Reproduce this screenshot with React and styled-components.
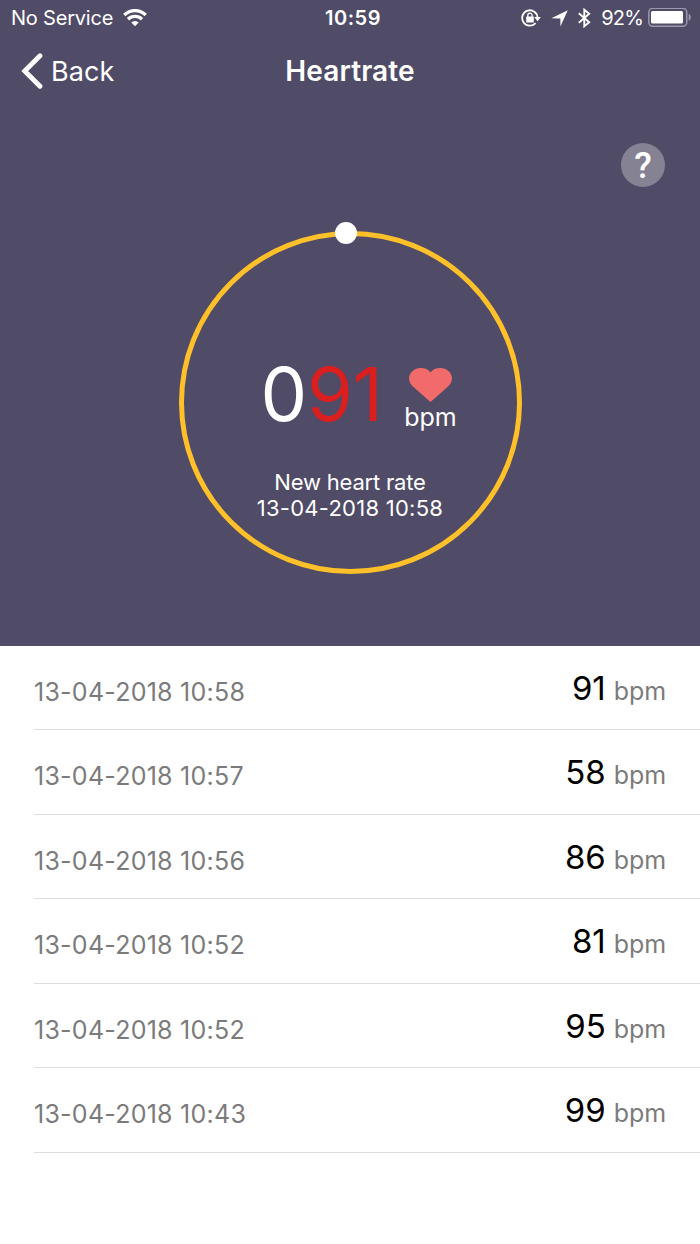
import React from "react";
import styled, { createGlobalStyle } from "styled-components";

const readings = [
  { date: "13-04-2018 10:58", value: 91 },
  { date: "13-04-2018 10:57", value: 58 },
  { date: "13-04-2018 10:56", value: 86 },
  { date: "13-04-2018 10:52", value: 81 },
  { date: "13-04-2018 10:52", value: 95 },
  { date: "13-04-2018 10:43", value: 99 },
];

const WifiIcon = () => (
  <svg width="24" height="18" viewBox="0 0 24 18" fill="none" stroke="#fff" strokeWidth="3.3">
    <path d="M1.3 6a15.2 15.2 0 0 1 21.4 0" />
    <path d="M5 10.3a10 10 0 0 1 14 0" />
    <path d="M12 17.2l-3.7-3.7a5.3 5.3 0 0 1 7.4 0z" fill="#fff" stroke="none" />
  </svg>
);

const LockIcon = () => (
  <svg width="20" height="18" viewBox="0 0 20 18" fill="none" stroke="#fff">
    <path d="M14.6 14.2A7.7 7.7 0 1 1 16.6 8.6" strokeWidth="1.8" />
    <path d="M13.2 8h6.6l-3.2 4.2z" fill="#fff" stroke="none" />
    <rect x="5.2" y="7.6" width="7.6" height="5.8" rx="0.6" fill="#fff" stroke="none" />
    <path d="M6.8 8V6.4a2.2 2.2 0 0 1 4.4 0V8" strokeWidth="1.3" />
  </svg>
);

const LocationIcon = () => (
  <svg width="17" height="17" viewBox="0 0 17 17">
    <path d="M16.8 0.3L9.4 16.6V8.5L0.3 8.2z" fill="#fff" />
  </svg>
);

const BluetoothIcon = () => (
  <svg width="13" height="20" viewBox="0 0 13 20" fill="none" stroke="#fff" strokeWidth="1.9">
    <path d="M0.8 5.3l10.4 9-4.9 4V1.7l4.9 4-10.4 9" />
  </svg>
);

const BatteryIcon = () => (
  <svg width="44" height="20" viewBox="0 0 44 20">
    <rect x="0.8" y="0.3" width="38" height="18" rx="4" fill="none" stroke="#9a97aa" strokeWidth="1.5" />
    <rect x="3" y="3" width="32" height="12.6" rx="1.6" fill="#fff" />
    <path d="M40.6 5.8c3 1 3 6 0 7z" fill="#9a97aa" />
  </svg>
);

const App = () => {
  return (
    <>
      <GlobalStyle />
      <Screen>
        <Hero>
          <StatusBar>
            <StatusLeft>
              <Carrier>No Service</Carrier>
              <WifiIcon />
            </StatusLeft>
            <Clock>10:59</Clock>
            <StatusRight>
              <LockIcon />
              <LocationIcon />
              <BluetoothIcon />
              <Percent>92%</Percent>
              <BatteryIcon />
            </StatusRight>
          </StatusBar>
          <NavBar>
            <BackButton>
              <svg width="22" height="36" viewBox="0 0 22 36">
                <path d="M19 2.7L3.7 18 19 33.3" fill="none" stroke="#fff" strokeWidth="4.8" strokeLinecap="round" />
              </svg>
              Back
            </BackButton>
            <Title>Heartrate</Title>
          </NavBar>
          <HelpRow>
            <HelpButton>?</HelpButton>
          </HelpRow>
          <Ring>
            <Knob />
            <Measure>
              <Digits>
                0<Active>91</Active>
              </Digits>
              <Unit>
                <svg width="43" height="34" viewBox="0 0 43 34">
                  <path d="M21.5 34L3.6 18.2C-1 13.8-1 7.2 3 3.4c4-4 12-4.6 16.6-.9.8.6 1.4 1.3 1.9 2 .5-.7 1.1-1.4 1.9-2C28-1.2 36-.6 40 3.4c4 3.8 4 10.4-.6 14.8z" fill="#f16b6b" />
                </svg>
                <span>bpm</span>
              </Unit>
            </Measure>
            <Caption $spacing="-0.2px">New heart rate</Caption>
            <Caption $spacing="0.25px">13-04-2018 10:58</Caption>
          </Ring>
        </Hero>
        <List>
          {readings.map((item, i) => (
            <Row key={i}>
              <RowDate>{item.date}</RowDate>
              <RowValue>{item.value}</RowValue>
              <RowUnit>bpm</RowUnit>
            </Row>
          ))}
        </List>
      </Screen>
    </>
  );
};

export default App;

const GlobalStyle = createGlobalStyle`
  * {
    box-sizing: border-box;
  }
  body {
    margin: 0;
    background: #fff;
    font-family: Inter, "Liberation Sans", sans-serif;
  }
  svg {
    display: block;
    flex: none;
  }
`;

const Screen = styled.div`
  width: 700px;
  height: 1244px;
  overflow: hidden;
  background: #fff;
`;

const Hero = styled.div`
  height: 645.5px;
  background: #504b66;
  color: #fff;
`;

const StatusBar = styled.div`
  display: grid;
  grid-template-columns: 1fr auto 1fr;
  align-items: center;
  height: 36px;
  padding: 0 8px 0 11px;
  font-size: 20px;
`;

const StatusLeft = styled.div`
  display: flex;
  align-items: center;
  gap: 10px;
`;

const Carrier = styled.span`
  letter-spacing: -0.2px;
`;

const Clock = styled.span`
  padding-left: 3px;
  font-weight: 600;
  letter-spacing: 0.5px;
`;

const StatusRight = styled.div`
  display: flex;
  align-items: center;
  justify-content: flex-end;
  gap: 10px;
`;

const Percent = styled.span`
  margin-right: -5px;
  letter-spacing: -0.8px;
`;

const NavBar = styled.div`
  display: grid;
  grid-template-columns: 1fr auto 1fr;
  align-items: center;
  height: 70px;
  padding: 0 21px;
  font-size: 27px;
`;

const BackButton = styled.div`
  display: flex;
  align-items: center;
  gap: 8px;
  letter-spacing: 0.1px;
`;

const Title = styled.div`
  font-size: 28px;
  font-weight: 600;
  letter-spacing: 0.1px;
`;

const HelpRow = styled.div`
  display: flex;
  justify-content: flex-end;
  padding: 37px 35px 0 0;
`;

const HelpButton = styled.div`
  display: flex;
  align-items: center;
  justify-content: center;
  width: 44px;
  height: 44px;
  padding-top: 2px;
  border-radius: 50%;
  background: #858294;
  font-family: Roboto, sans-serif;
  font-size: 36px;
  font-weight: 500;
`;

const Ring = styled.div`
  position: relative;
  width: 343px;
  height: 343px;
  margin: 43.5px auto 0;
  padding-top: 118.5px;
  border: 5px solid #ffc02a;
  border-radius: 50%;
`;

/* sits on top of the ring stroke */
const Knob = styled.div`
  position: absolute;
  top: -14px;
  left: 151px;
  width: 22px;
  height: 22px;
  border-radius: 50%;
  background: #fff;
`;

const Measure = styled.div`
  display: flex;
  padding-left: 77px;
  height: 80px;
  margin-bottom: 35px;
`;

const Digits = styled.div`
  width: 127px;
  font-size: 74px;
  line-height: 80px;
  font-weight: 400;
  letter-spacing: -0.2px;
`;

const Active = styled.span`
  color: #d91f1f;
`;

const Unit = styled.div`
  display: flex;
  flex-direction: column;
  align-items: center;
  width: 54px;
  margin-left: 16px;
  padding-top: 14px;
  font-size: 25px;
  line-height: 31px;
`;

const Caption = styled.div`
  font-size: 22px;
  line-height: 26px;
  text-align: center;
  letter-spacing: ${(props) => props.$spacing};
`;

const List = styled.div`
  padding-left: 34px;
`;

const Row = styled.div`
  display: flex;
  align-items: baseline;
  height: 84.5px;
  padding: 22px 34px 0 0;
  border-bottom: 1px solid #dedede;
  line-height: 40px;
`;

const RowDate = styled.span`
  flex: 1;
  align-self: flex-start;
  padding-top: 4px;
  color: #7b7b7b;
  font-size: 25px;
  letter-spacing: 0.25px;
`;

const RowValue = styled.span`
  color: #000;
  font-size: 33px;
`;

const RowUnit = styled.span`
  margin-left: 8px;
  color: #7b7b7b;
  font-size: 25px;
  letter-spacing: -0.1px;
`;
